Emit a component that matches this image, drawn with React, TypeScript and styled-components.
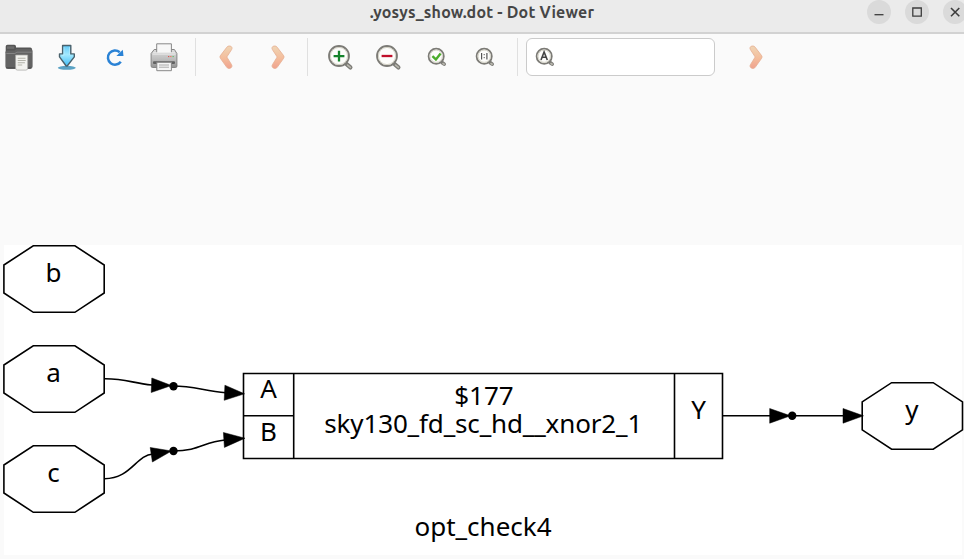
import React from 'react';
import styled, { createGlobalStyle } from 'styled-components';

const GlobalStyle = createGlobalStyle`
  * { box-sizing: border-box; }
  body { margin: 0; background: #fafafa; overflow: hidden; }
`;

const Window = styled.div`
  width: 964px;
  height: 559px;
  display: flex;
  flex-direction: column;
  overflow: hidden;
  background: #fafafa;
`;

const TitleBar = styled.header`
  height: 34px;
  flex: none;
  display: grid;
  grid-template-columns: 1fr auto 1fr;
  background: #ebebeb;
  border-bottom: 2px solid #d2d2d2;
`;

const Title = styled.h1`
  grid-column: 2;
  margin: 0;
  width: 226px;
  font: 700 16px/24px Ubuntu, 'Noto Sans', sans-serif;
  letter-spacing: 0.2px;
  text-align: center;
  white-space: nowrap;
  color: #464646;
`;

const WindowControls = styled.div`
  display: flex;
  justify-content: flex-end;
  gap: 14px;
  margin-right: -3px;
`;

const ControlButton = styled.button`
  width: 24px;
  height: 24px;
  padding: 0;
  border: 0;
  border-radius: 50%;
  background: #dadada;
  svg { display: block; }
`;

const Toolbar = styled.nav`
  height: 46px;
  flex: none;
  display: flex;
  align-items: center;
`;

const Group = styled.div<{ $gap?: number }>`
  display: flex;
  gap: ${(p) => p.$gap ?? 0}px;
`;

const ToolButton = styled.button<{ $width?: number }>`
  width: ${(p) => p.$width ?? 48}px;
  height: 38px;
  padding: 0;
  border: 0;
  background: none;
  display: flex;
  align-items: center;
  justify-content: center;
  svg { display: block; flex: none; }
`;

const Separator = styled.div<{ $before: number; $after: number }>`
  width: 1px;
  height: 38px;
  margin: 0 ${(p) => p.$after}px 0 ${(p) => p.$before}px;
  background: #e0e0e0;
`;

const SearchBox = styled.label`
  width: 189px;
  height: 38px;
  margin-right: 17px;
  padding-left: 2px;
  display: flex;
  align-items: center;
  border: 1px solid #cbcbcb;
  border-radius: 6px;
  background: #fff;
`;

const SearchInput = styled.input`
  flex: 1;
  min-width: 0;
  border: 0;
  outline: 0;
  background: none;
  font: 16px 'Noto Sans', sans-serif;
`;

const Canvas = styled.main`
  flex: 1;
  padding: 165px 2px 4px 4px;
`;

const Sheet = styled.section`
  height: 310px;
  background: #fff;
  svg { display: block; overflow: visible; }
`;

const Label = styled.text`
  font-family: 'Noto Sans', sans-serif;
  font-size: 26px;
  text-anchor: middle;
  fill: #000;
  stroke: none;
`;

const Icon = ({ children }: { children: React.ReactNode }) => (
  <svg width="32" height="32" viewBox="0 0 32 32" fill="none">{children}</svg>
);

const FolderIcon = () => (
  <Icon>
    <path d="M2.7 7.5V5.4q0-1.7 1.8-1.7h6.8q1.7 0 1.7 1.8v.9h14.2q1.8 0 1.8 1.8V12H2.7z" fill="#555" />
    <path d="M4 7.2V5.3h7.2v2.6H4z" fill="#6d6d6d" />
    <path d="M2.4 11.5q0-2 2-2h7l2-1.5h14.2q2 0 2 2v15.5q0 2.4-2.4 2.4H4.8q-2.4 0-2.4-2.4z" fill="#636363" />
    <path d="M3.3 12.5h8.6l2-1.3h14.7" stroke="#858585" />
    <path d="M3 26.8h25" stroke="#4e4e4e" />
    <path d="M12.6 14h12.1v13.2q0 1.9-1.9 1.9h-8.3q-1.9 0-1.9-1.9z" fill="#f3f3ef" stroke="#a5a5a2" strokeWidth=".7" />
    <path d="M14.7 17.2h7.8M14.7 19.5h8M14.7 21.7h7.2M14.7 24h4.5" stroke="#b3b3a9" strokeWidth="1.1" />
  </Icon>
);

const DownloadIcon = () => (
  <Icon>
    <defs>
      <linearGradient id="arrow" x2="0" y2="1"><stop stopColor="#62c9f7" /><stop offset=".45" stopColor="#a3e9ff" /><stop offset="1" stopColor="#40bdf6" /></linearGradient>
    </defs>
    <ellipse cx="15.8" cy="26.8" rx="9" ry="2" fill="#5aa2c4" />
    <path d="M11.6 4.5h8.2v8.4h3.5v3L16.2 25h-1L8.5 15.8v-2.9h3.1z" fill="url(#arrow)" stroke="#49616c" strokeWidth="1.4" strokeLinejoin="round" />
    <path d="M13 6v8.3h-2.5M18.5 6v8" stroke="#c2f1ff" strokeOpacity=".7" strokeWidth=".8" />
  </Icon>
);

const RefreshIcon = () => (
  <Icon>
    <path d="M20.7 11.2A7.1 7.1 0 1 0 21.8 20.7" stroke="#2a82d5" strokeWidth="2.5" />
    <path d="M23.8 8.8l.7 6.2h-7.1z" fill="#2a82d5" />
  </Icon>
);

const PrinterIcon = () => (
  <Icon>
    <defs>
      <linearGradient id="printer" x2="0" y2="1"><stop stopColor="#ddd" /><stop offset=".55" stopColor="#bcbcbc" /><stop offset="1" stopColor="#929292" /></linearGradient>
    </defs>
    <path d="M6.2 8.5h20.2l2.5 4V25q0 1.5-1.5 1.5H4.7q-1.6 0-1.6-1.5V12.5z" fill="url(#printer)" stroke="#868686" />
    <path d="M8.7 11.6V2.8h14.7v8.8" fill="#f7f7f7" stroke="#888" />
    <path d="M5 11.7h22M4.5 13.2h23" stroke="#eee" strokeWidth=".8" />
    <rect x="5" y="20.3" width="22" height="2.8" rx="1" fill="#626262" />
    <path d="M8.8 21.3h14.6v8.4H8.8z" fill="#f5f5f5" stroke="#888" />
    <path d="M11 24h10M11 26.2h10" stroke="#aaa" />
    <path d="M20 15.6h1.3" stroke="#e14c45" /><path d="M22.2 15.6h1.3" stroke="#ee6e52" /><path d="M24.5 15.6h1.3" stroke="#52be5b" />
  </Icon>
);

const chevronShape =
  'M10.4 8.6C9.4 7 10.2 5.4 11.8 5.1C13.4 4.7 14.7 5.3 15.6 6.8L21.6 14.6Q22.6 15.9 21.6 17.3L15.6 25.8C14.6 27.4 13.2 27.8 11.8 27.2C10.2 26.6 9.6 25.2 10.4 23.7L15.2 16Z';

const Chevron = ({ back = false }: { back?: boolean }) => (
  <Icon>
    <defs>
      <linearGradient id="peach" gradientUnits="userSpaceOnUse" x1="0" y1="4" x2="0" y2="28"><stop stopColor="#efd8b8" /><stop offset=".55" stopColor="#f4bd9c" /><stop offset="1" stopColor="#efa18d" /></linearGradient>
    </defs>
    <path
      d={chevronShape}
      transform={back ? 'translate(32 0) scale(-1 1)' : undefined}
      fill="url(#peach)" stroke="#e6ad90" strokeWidth=".8"
    />
  </Icon>
);

const Magnifier = ({ small = false, children }: { small?: boolean; children: React.ReactNode }) => {
  const [c, r, end] = small ? [15.2, 7.6, 23.2] : [15, 10, 26.4];
  const start = c + r * 0.76;
  return (
    <Icon>
      <path d={`M${start} ${start + .5}L${end} ${end}`} stroke="#7c7b76" strokeWidth={small ? 3.6 : 4.2} strokeLinecap="round" />
      <path d={`M${start + 1} ${start + 1.5}L${end} ${end}`} stroke="#b8b7ae" strokeWidth="1.6" strokeLinecap="round" />
      <circle cx={c} cy={c} r={r} fill="#fdfdfb" stroke="#7c7b76" strokeWidth="1.8" />
      <circle cx={c} cy={c} r={r - 1.4} stroke="#d3d1c5" strokeWidth="1" />
      {children}
    </Icon>
  );
};

const Octagon = ({ x, y, name }: { x: number; y: number; name: string }) => (
  <g transform={`translate(${x} ${y})`}>
    <path d="M0 19.7L29.4 .5H71L100.3 19.7V47.7L71 67H29.4L0 47.7z" />
    <Label x="49.7" y="36.8">{name}</Label>
  </g>
);

const arrowTips = [
  'M151.8 378L171.5 385.5L151.2 392.5z',
  'M224.9 385.2L244.5 393.8L224.2 400.3z',
  'M150.2 447.5L171.5 451L152.4 462z',
  'M223.4 432.5L245 438.2L224.4 447.4z',
  'M769.7 408.5L790.5 415.8L769.7 423.2z',
  'M843 408.5L863.5 415.8L843 423.2z',
];

const Netlist = () => (
  <svg width="958" height="310" viewBox="4 245 958 310" fill="none" stroke="#000" strokeWidth="1.6">
    <Octagon x={3.9} y={245.3} name="b" />
    <Octagon x={3.9} y={345.3} name="a" />
    <Octagon x={3.9} y={445.3} name="c" />
    <Octagon x={862.2} y={382.2} name="y" />
    <path d="M243.5 373.5H722.5V458.5H243.5zM293.7 373.5V458.5M674.5 373.5V458.5M243.5 415.8H293.7" />
    <path d="M104 378.8C125 378.5 132 383 152 385M173 386C194 386 204 391 226 392.8M104 478.7C131 479 136 455 153 454M173 451C200 451 203 442 225 440M722.5 415.8H770M792 415.8H844" />
    {arrowTips.map((d) => <path key={d} d={d} fill="#000" strokeWidth=".5" />)}
    <g fill="#000" stroke="none">
      <circle cx="173.5" cy="386.2" r="4.2" />
      <circle cx="173.5" cy="451" r="4.2" />
      <circle cx="792.2" cy="415.8" r="4.2" />
    </g>
    <Label x="268.5" y="397.8">A</Label>
    <Label x="268.5" y="440.8">B</Label>
    <Label x="698.5" y="418.7">Y</Label>
    <Label x="484" y="405">$177</Label>
    <Label x="483.3" y="433" textLength="318">sky130_fd_sc_hd__xnor2_1</Label>
    <Label x="483" y="536.4">opt_check4</Label>
  </svg>
);

export default function App() {
  return (
    <Window>
      <GlobalStyle />
      <TitleBar>
        <Title>.yosys_show.dot - Dot Viewer</Title>
        <WindowControls>
          <ControlButton aria-label="Minimize">
            <svg width="24" height="24"><path d="M7.5 14.7h9" stroke="#3d3d3d" strokeWidth="1.3" /></svg>
          </ControlButton>
          <ControlButton aria-label="Maximize">
            <svg width="24" height="24" fill="none"><path d="M7.8 8h8.5v8.2H7.8z" stroke="#3d3d3d" strokeWidth="1.3" /></svg>
          </ControlButton>
          <ControlButton aria-label="Close">
            <svg width="24" height="24"><path d="M8 8l8.3 8.3M16.3 8L8 16.3" stroke="#3d3d3d" strokeWidth="1.6" /></svg>
          </ControlButton>
        </WindowControls>
      </TitleBar>
      <Toolbar>
        <Group>
          <ToolButton $width={37} aria-label="Open"><FolderIcon /></ToolButton>
          <ToolButton $width={60} aria-label="Export"><DownloadIcon /></ToolButton>
          <ToolButton $width={36} aria-label="Reload"><RefreshIcon /></ToolButton>
          <ToolButton $width={61} aria-label="Print"><PrinterIcon /></ToolButton>
        </Group>
        <Separator $before={1} $after={6} />
        <Group $gap={4}>
          <ToolButton aria-label="Back"><Chevron back /></ToolButton>
          <ToolButton aria-label="Forward"><Chevron /></ToolButton>
        </Group>
        <Separator $before={5} $after={8} />
        <Group>
          <ToolButton aria-label="Zoom in"><Magnifier><path d="M15 9.7v10.8M9.6 15.1h10.8" stroke="#15832b" strokeWidth="2.3" /></Magnifier></ToolButton>
          <ToolButton aria-label="Zoom out"><Magnifier><path d="M9.6 15h10.8" stroke="#c0102b" strokeWidth="2.3" /></Magnifier></ToolButton>
          <ToolButton $width={50} aria-label="Fit page"><Magnifier small><path d="M11.4 15.2l3.5 3.2 4.7-5.8" stroke="#4cad2b" strokeWidth="2.4" /></Magnifier></ToolButton>
          <ToolButton $width={46} aria-label="Actual size"><Magnifier small><path d="M12.6 12v6.4M17.9 12v6.4" stroke="#555" strokeWidth="1.2" /><path d="M15.2 13v1.2M15.2 16v1.2" stroke="#555" /></Magnifier></ToolButton>
        </Group>
        <Separator $before={9} $after={8} />
        <SearchBox>
          <Magnifier small><path d="M12 19l3.1-8 3.2 8M13.3 16.3h3.8" stroke="#444" strokeWidth="1.6" /></Magnifier>
          <SearchInput aria-label="Find" />
        </SearchBox>
        <ToolButton aria-label="Find next"><Chevron /></ToolButton>
      </Toolbar>
      <Canvas>
        <Sheet><Netlist /></Sheet>
      </Canvas>
    </Window>
  );
}
